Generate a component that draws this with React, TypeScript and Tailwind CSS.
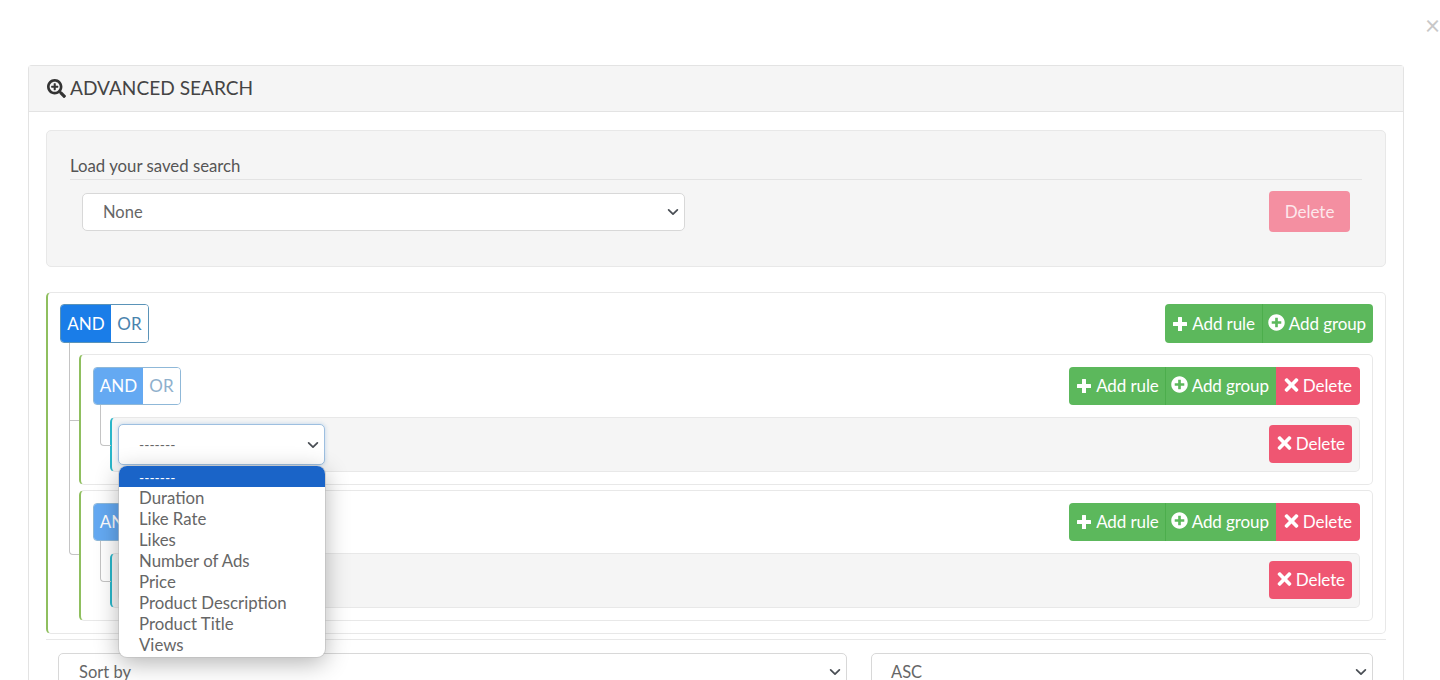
import React from "react";
import { FaSearchPlus, FaPlusCircle, FaTimes } from "react-icons/fa";

function Chevron({ className }: { className?: string }) {
  return (
    <svg viewBox="0 0 16 16" className={className} fill="none" stroke="#4a4f55" strokeWidth="2" strokeLinecap="round" strokeLinejoin="round">
      <path d="M3 5.5l5 5 5-5" />
    </svg>
  );
}

function PlusIcon() {
  return (
    <svg viewBox="0 0 16 16" className="h-[16px] w-[16px]" fill="currentColor">
      <path d="M6 1.5a.5.5 0 0 1 .5-.5h3a.5.5 0 0 1 .5.5V6h4.5a.5.5 0 0 1 .5.5v3a.5.5 0 0 1-.5.5H10v4.5a.5.5 0 0 1-.5.5h-3a.5.5 0 0 1-.5-.5V10H1.500a.5.5 0 0 1-.5-.5v-3a.5.5 0 0 1 .5-.5H6z" />
    </svg>
  );
}

function AndOr({ light }: { light?: boolean }) {
  return (
    <div className={`flex rounded-[4px] overflow-hidden border ${light ? "h-[38px] w-[88px] border-[#8fb8d8]" : "h-[39px] w-[89px] border-[#5a93b8]"}`}>
      <div className={`flex items-center justify-center text-white text-[17px] ${light ? "w-[49px] bg-[#64a9f2]" : "w-[50px] bg-[#1a7de8]"}`}>AND</div>
      <div className={`flex flex-1 items-center justify-center bg-white text-[17px] ${light ? "text-[#8fb0cc]" : "text-[#4a83ad]"}`}>OR</div>
    </div>
  );
}

function Btn({ icon, label, className }: { icon: React.ReactNode; label: string; className: string }) {
  return (
    <div className={`flex h-full items-center gap-[4px] text-white text-[17px] tracking-[-0.1px] ${className}`}>
      {icon}
      <span>{label}</span>
    </div>
  );
}

function GroupActions({ del }: { del?: boolean }) {
  return (
    <div className={`flex rounded-[4px] overflow-hidden ${del ? "h-[38px]" : "h-[39px]"}`}>
      <Btn icon={<PlusIcon />} label="Add rule" className={`bg-[#5cb85c] pl-[7px] ${del ? "pr-[6px]" : "pr-[7px]"}`} />
      <Btn icon={<FaPlusCircle className="h-[17px] w-[17px] -mt-[3px]" />} label="Add group" className="border-l border-[#4cae4c] bg-[#5cb85c] pl-[5px] pr-[7px]" />
      {del && <Btn icon={<FaTimes className="h-[20px] w-[15px] -mt-[2px]" />} label="Delete" className="bg-[#ef5672] pl-[8px] pr-[8px]" />}
    </div>
  );
}

function RuleDelete() {
  return (
    <div className="mb-[2px] flex h-[38px] items-center gap-[4px] rounded-[4px] bg-[#ef5672] pl-[8px] pr-[7px] text-white text-[17px] tracking-[-0.1px]">
      <FaTimes className="h-[20px] w-[15px] -mt-[2px]" />
      <span>Delete</span>
    </div>
  );
}

function SubGroup({ first }: { first?: boolean }) {
  return (
    <div className={`relative ml-[31px] mr-[12px] h-[131px] rounded-[5px] border border-[#e8e8e8] border-l-2 border-l-[#8fbf5f] bg-white pl-[12px] pr-[12px] pt-[12px] ${first ? "mt-[11px]" : "mt-[5px]"}`}>
      <div className="flex items-start justify-between">
        <AndOr light />
        <GroupActions del />
      </div>
      <div className="relative ml-[17px] mt-[12px] flex h-[55px] items-center justify-between rounded-[5px] border border-[#e8e8e8] border-l-2 border-l-[#29b6c9] bg-[#f5f5f5] pl-[6px] pr-[7px]">
        <div className={`flex h-[41px] w-[207px] items-center justify-between rounded-[5px] border bg-white pl-[20px] pr-[4px] ${first ? "border-[#9dbfe0] shadow-[0_0_4px_rgba(120,170,220,0.45)]" : "border-[#d8d8d8]"}`}>
          {first ? <span className="text-[14px] text-[#666]">-------</span> : <span />}
          <Chevron className="h-[14px] w-[14px]" />
        </div>
        <RuleDelete />
      </div>
      <div className="absolute left-[19px] top-[50px] h-[41px] w-[11px] rounded-bl-[4px] border-b border-l border-[#c4c4c4]" />
    </div>
  );
}

const options = ["Duration", "Like Rate", "Likes", "Number of Ads", "Price", "Product Description", "Product Title", "Views"];

export default function App() {
  return (
    <div className="relative h-[680px] w-[1440px] overflow-hidden bg-white pl-[28px] pt-[65px] font-['Lato','Open_Sans',sans-serif] text-[#555]">
      <span className="absolute left-[1425px] top-[10px] text-[26px] leading-[30px] text-[#c8c8c8]">×</span>

      <div className="w-[1376px] rounded-t-[4px] border border-[#e3e3e3] border-b-0">
        <div className="flex h-[46px] items-center gap-[4px] border-b border-[#e3e3e3] bg-[#f5f5f5] pb-[1px] pl-[18px] text-[19.1px] text-[#444]">
          <FaSearchPlus className="h-[19px] w-[19px] text-[#333]" />
          <span>ADVANCED SEARCH</span>
        </div>
        <div className="px-[17px] pt-[18px]">
          <div className="h-[137px] rounded-[5px] border border-[#e8e8e8] bg-[#f5f5f5] px-[23px] pt-[23px]">
            <div className="border-b border-[#e3e3e3] pb-[2px] text-[16.8px] leading-[23px] text-[#555]">Load your saved search</div>
            <div className="flex items-start justify-between pl-[12px] pr-[12px] pt-[11px]">
              <div className="mt-[2px] flex h-[38px] w-[603px] items-center justify-between rounded-[5px] border border-[#d8d8d8] bg-white pl-[20px] pr-[4px] text-[16.5px] text-[#666]">
                <span>None</span>
                <Chevron className="h-[14px] w-[14px]" />
              </div>
              <div className="flex h-[41px] w-[81px] items-center justify-center rounded-[4px] bg-[#f48fa1] text-[17px] text-[#fde8ec]">Delete</div>
            </div>
          </div>

          <div className="relative mt-[25px] h-[342px] rounded-[5px] border border-[#e8e8e8] border-l-2 border-l-[#8fbf5f] pt-[11px]">
            <div className="flex items-start justify-between pl-[12px] pr-[12px]">
              <AndOr />
              <GroupActions />
            </div>
            <SubGroup first />
            <SubGroup />
            <div className="absolute left-[21px] top-[50px] h-[78px] w-[10px] border-b border-l border-[#c4c4c4]" />
            <div className="absolute left-[21px] top-[128px] h-[134px] w-[10px] rounded-bl-[4px] border-b border-l border-[#c4c4c4]" />
          </div>

          <div className="mt-[5px] border-t border-[#e8e8e8]" />
          <div className="flex gap-[24px] pl-[12px] pr-[13px] pt-[13px]">
            <div className="flex h-[38px] w-[789px] items-center justify-between rounded-[5px] border border-[#d8d8d8] bg-white pl-[20px] pr-[4px] text-[16.5px] text-[#666]">
              <span>Sort by</span>
              <Chevron className="h-[14px] w-[14px]" />
            </div>
            <div className="flex h-[38px] flex-1 items-center justify-between rounded-[5px] border border-[#d8d8d8] bg-white pl-[19px] pr-[4px] text-[16.5px] text-[#666]">
              <span>ASC</span>
              <Chevron className="h-[14px] w-[14px]" />
            </div>
          </div>
        </div>
      </div>

      <div className="absolute left-[119px] top-[466px] z-10 h-[191px] w-[206px] overflow-hidden rounded-[8px] bg-white shadow-[0_6px_24px_rgba(0,0,0,0.3)] ring-1 ring-[#bdbdbd]/60">
        <div className="flex h-[21px] items-center bg-[#1a64c8] pl-[20px] pt-[2px] text-[14px] text-white">-------</div>
        {options.map((o) => (
          <div key={o} className="h-[21px] pl-[20px] text-[16.8px] leading-[21px] text-[#666]">{o}</div>
        ))}
      </div>
    </div>
  );
}
